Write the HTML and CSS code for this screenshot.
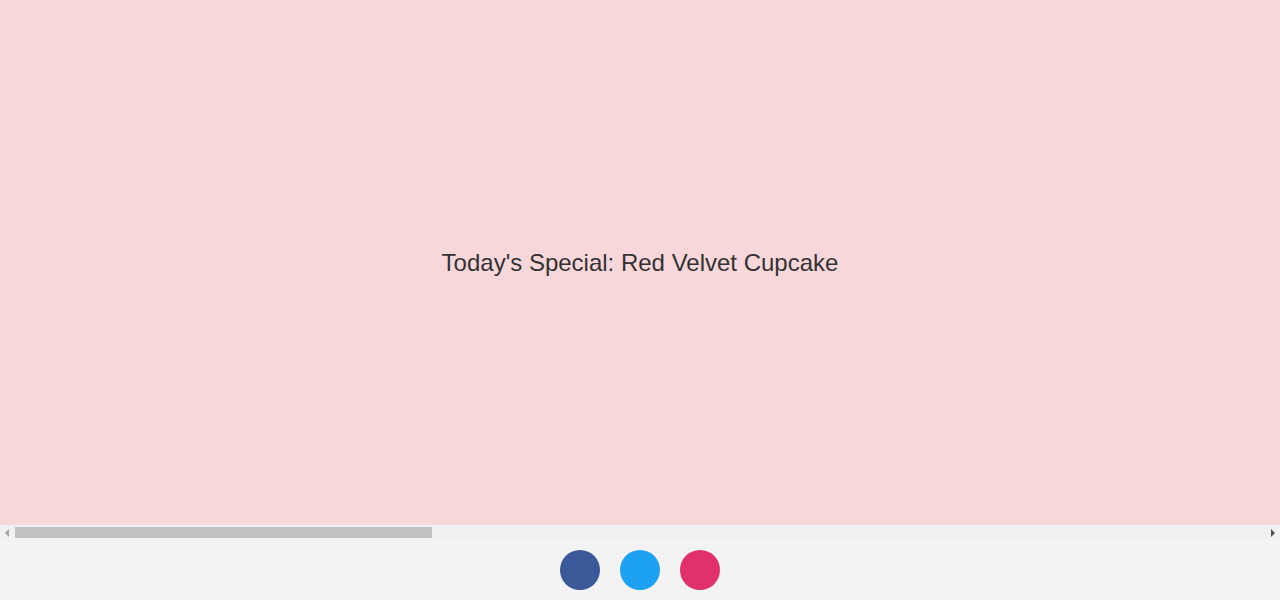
FILE: index.html
```html
<!DOCTYPE html>
<html lang="en">
<head>
<meta charset="utf-8">
<title>Today's Special</title>
<link rel="stylesheet" href="styles.css">
</head>
<body>
<main class="carousel">
  <div class="viewport">
    <section class="slide"><p class="special">Today's Special: Red Velvet Cupcake</p></section>
  </div>
  <div class="scrollbar" aria-hidden="true">
    <span class="sb-btn sb-left"><span class="arrow arrow-left"></span></span>
    <span class="sb-track"><span class="sb-thumb"></span></span>
    <span class="sb-btn sb-right"><span class="arrow arrow-right"></span></span>
  </div>
</main>
<footer class="social">
  <a class="social-link facebook" href="#" aria-label="Facebook"></a>
  <a class="social-link twitter" href="#" aria-label="Twitter"></a>
  <a class="social-link instagram" href="#" aria-label="Instagram"></a>
</footer>
</body>
</html>
```
FILE: styles.css
```css
html, body {
  margin: 0;
  padding: 0;
  height: 100%;
  overflow: hidden;
}
body {
  font-family: "Liberation Sans", Arial, sans-serif;
  background: #f3f3f3;
  color: #333;
}
.carousel {
  display: flex;
  flex-direction: column;
  height: 540px;
  background: #f8d7da;
}
.viewport {
  flex: 1;
  display: flex;
  overflow: hidden;
}
.slide {
  flex: 0 0 100%;
  display: flex;
  align-items: center;
  justify-content: center;
}
.special {
  margin: 0;
  font-size: 24px;
  color: #333;
}
.scrollbar {
  display: flex;
  height: 15px;
  background: #f1f1f1;
}
.sb-btn {
  display: flex;
  width: 15px;
  flex: 0 0 15px;
  padding-top: 4px;
  box-sizing: border-box;
}
.sb-left { padding-left: 5px; }
.sb-right { padding-left: 6px; }
.arrow {
  width: 0;
  height: 0;
  border-top: 4px solid transparent;
  border-bottom: 4px solid transparent;
}
.arrow-left { border-right: 4px solid #a3a3a3; }
.arrow-right { border-left: 4px solid #505050; }
.sb-track {
  flex: 1;
  display: flex;
  padding: 2px 0;
}
.sb-thumb {
  width: 33.36%;
  background: #c1c1c1;
}
.social {
  display: flex;
  justify-content: center;
  gap: 20px;
  padding: 10px 0;
  background: #f3f3f3;
}
.social-link {
  display: block;
  width: 40px;
  height: 40px;
  border-radius: 50%;
}
.facebook { background: #3b5998; }
.twitter { background: #1da1f2; }
.instagram { background: #e1306c; }
```
